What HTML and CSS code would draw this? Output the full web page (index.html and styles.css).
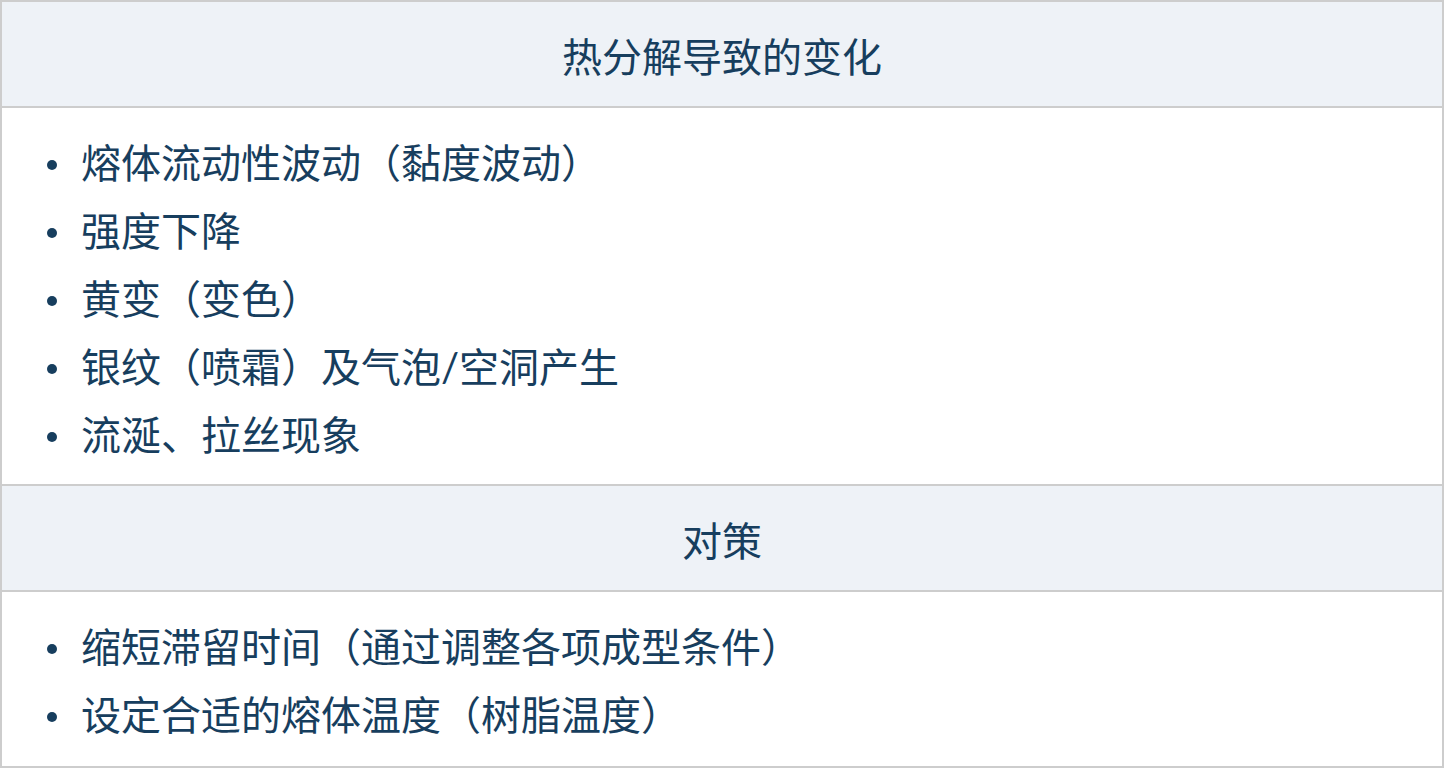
FILE: index.html
```html
<!DOCTYPE html>
<html lang="zh-CN">
<head>
<meta charset="utf-8">
<title>热分解导致的变化</title>
<link rel="stylesheet" href="styles.css">
</head>
<body>
<div class="table">
  <div class="head">热分解导致的变化</div>
  <div class="body">
    <ul class="list">
      <li>熔体流动性波动（黏度波动）</li>
      <li>强度下降</li>
      <li>黄变（变色）</li>
      <li>银纹（喷霜）及气泡/空洞产生</li>
      <li>流涎、拉丝现象</li>
    </ul>
  </div>
  <div class="head">对策</div>
  <div class="body">
    <ul class="list">
      <li>缩短滞留时间（通过调整各项成型条件）</li>
      <li>设定合适的熔体温度（树脂温度）</li>
    </ul>
  </div>
</div>
</body>
</html>
```
FILE: styles.css
```css
html, body {
  margin: 0;
  padding: 0;
  background: #ffffff;
}
body {
  font-family: Lato, "Noto Sans CJK SC", sans-serif;
  color: #173e5e;
  font-size: 40px;
}
.table {
  width: 1444px;
  height: 768px;
  box-sizing: border-box;
  border: 2px solid #cdcdcd;
  display: flex;
  flex-direction: column;
}
.head {
  background: #eef2f7;
  text-align: center;
  line-height: 56px;
  padding: 27px 0 21px;
  border-bottom: 2px solid #cdcdcd;
}
.body {
  border-bottom: 2px solid #cdcdcd;
  padding: 21px 0 15px 45px;
}
.body:last-child {
  border-bottom: none;
  flex: 1;
}
.list {
  list-style: none;
  margin: 0;
  padding: 0;
}
.list li {
  display: flex;
  align-items: center;
  gap: 24px;
  line-height: 68px;
}
.list li::before {
  content: "";
  width: 10px;
  height: 10px;
  border-radius: 50%;
  background: currentColor;
  flex: none;
  position: relative;
  top: 2px;
}
```
